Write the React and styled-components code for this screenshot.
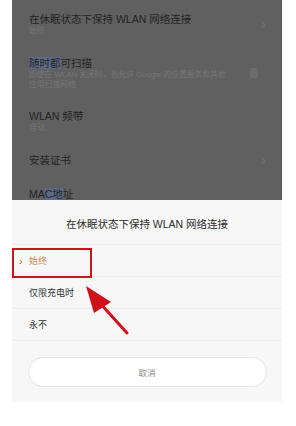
import React from 'react';
import styled, { createGlobalStyle } from 'styled-components';

const Global = createGlobalStyle`
  body {
    margin: 0;
    background: #ffffff;
    font-family: "Liberation Sans", "Noto Sans CJK SC", sans-serif;
  }
`;

const Page = styled.div`
  position: relative;
  width: 296px;
  height: 426px;
  background: #fff;
  overflow: hidden;
`;

const Screen = styled.div`
  margin-left: 12px;
  width: 270px;
  height: 402px;
  display: flex;
  flex-direction: column;
`;

const Dimmed = styled.div`
  height: 200px;
  background: #606060;
  overflow: hidden;
  display: flex;
  flex-direction: column;
`;

const BgRow = styled.div`
  flex: none;
  height: ${p => p.h}px;
  padding: 0 16px 0 17px;
  display: flex;
  align-items: center;
  gap: 8px;
  .text {
    flex: 1;
    display: flex;
    flex-direction: column;
  }
  .title {
    font-size: 10.5px;
    line-height: 14px;
    color: #242424;
  }
  .sub {
    font-size: 7.8px;
    line-height: 10px;
    color: #767676;
  }
  .sel {
    background: rgba(90, 120, 185, 0.45);
  }
`;

const Chevron = styled.span`
  font-size: 14px;
  color: #707070;
  line-height: 1;
`;

const Toggle = styled.span`
  width: 8px;
  height: 10px;
  border-radius: 2px;
  background: #6c6c6c;
  margin-right: 8px;
`;

const Sheet = styled.div`
  flex: 1;
  background: #f7f7f7;
  display: flex;
  flex-direction: column;
`;

const SheetTitle = styled.div`
  height: 45px;
  display: flex;
  align-items: center;
  justify-content: center;
  padding-top: 2px;
  box-sizing: border-box;
  font-size: 10.5px;
  color: #2c2c2c;
  border-bottom: 1px solid #ebebeb;
`;

const Option = styled.div`
  height: 31px;
  display: flex;
  align-items: center;
  padding-left: ${p => (p.active ? 7 : 17)}px;
  gap: 4px;
  font-size: 9px;
  color: ${p => (p.active ? '#c88a5a' : '#333')};
  border-bottom: 1px solid #ebebeb;
  .mark {
    font-size: 11px;
    color: #a86e45;
    width: 6px;
  }
`;

const CancelArea = styled.div`
  flex: 1;
  display: flex;
  align-items: flex-start;
  justify-content: center;
  padding-top: 16px;
`;

const CancelButton = styled.div`
  width: 239px;
  height: 30px;
  border-radius: 15px;
  background: #fff;
  border: 1px solid #e6e6e6;
  box-sizing: border-box;
  display: flex;
  align-items: center;
  justify-content: center;
  font-size: 8.5px;
  color: #888;
`;

const Highlight = styled.div`
  position: absolute;
  left: 12px;
  top: 248px;
  width: 80px;
  height: 30px;
  box-sizing: border-box;
  border: 2.5px solid #c8161d;
`;

const Arrow = styled.svg`
  position: absolute;
  left: 0;
  top: 0;
  pointer-events: none;
`;

export default function App() {
  return (
    <Page>
      <Global />
      <Screen>
        <Dimmed>
          <BgRow h={48}>
            <div className="text">
              <span className="title">在休眠状态下保持 WLAN 网络连接</span>
              <span className="sub">始终</span>
            </div>
            <Chevron>›</Chevron>
          </BgRow>
          <BgRow h={49}>
            <div className="text">
              <span className="title"><span className="sel">随时都</span>可扫描</span>
              <span className="sub">即使在 WLAN 关闭时，也允许 Google 的位置服务和其他</span>
              <span className="sub">应用扫描网络</span>
            </div>
            <Toggle />
          </BgRow>
          <BgRow h={48}>
            <div className="text">
              <span className="title">WLAN 频带</span>
              <span className="sub">自动</span>
            </div>
          </BgRow>
          <BgRow h={30}>
            <div className="text">
              <span className="title">安装证书</span>
            </div>
            <Chevron>›</Chevron>
          </BgRow>
          <BgRow h={38}>
            <div className="text">
              <span className="title">MA<span className="sel">C地</span>址</span>
            </div>
          </BgRow>
        </Dimmed>
        <Sheet>
          <SheetTitle>在休眠状态下保持 WLAN 网络连接</SheetTitle>
          <Option active>
            <span className="mark">›</span>
            始终
          </Option>
          <Option>仅限充电时</Option>
          <Option>永不</Option>
          <CancelArea>
            <CancelButton>取消</CancelButton>
          </CancelArea>
        </Sheet>
      </Screen>
      <Highlight />
      <Arrow width="296" height="426" viewBox="0 0 296 426">
        <line x1="127" y1="333" x2="99" y2="302" stroke="#d0101a" strokeWidth="3" strokeLinecap="round" />
        <polygon points="86,286 111,302 94,313" fill="#d0101a" />
      </Arrow>
    </Page>
  );
}
